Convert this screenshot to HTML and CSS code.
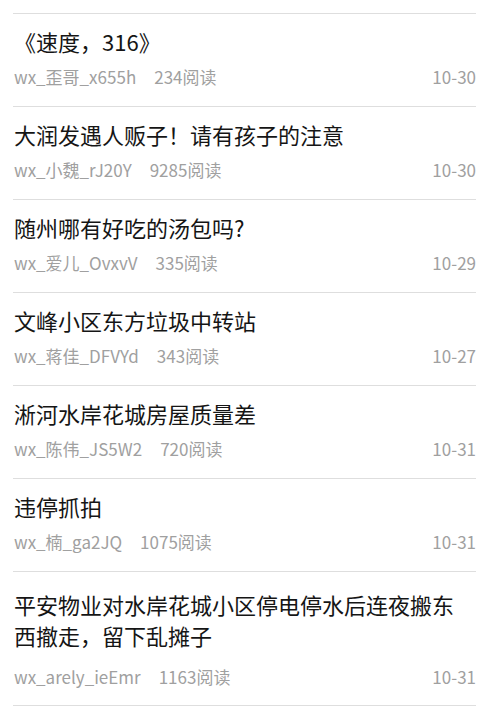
FILE: index.html
```html
<!DOCTYPE html>
<html lang="zh-CN">
<head>
<meta charset="utf-8">
<title>帖子列表</title>
<link rel="stylesheet" href="styles.css">
</head>
<body>
<ul class="list">
  <li class="item">
    <div class="title">《速度，316》</div>
    <div class="meta"><span class="user">wx_歪哥_x655h</span><span class="reads">234阅读</span><span class="date">10-30</span></div>
  </li>
  <li class="item">
    <div class="title">大润发遇人贩子！请有孩子的注意</div>
    <div class="meta"><span class="user">wx_小魏_rJ20Y</span><span class="reads">9285阅读</span><span class="date">10-30</span></div>
  </li>
  <li class="item">
    <div class="title">随州哪有好吃的汤包吗?</div>
    <div class="meta"><span class="user">wx_爱儿_OvxvV</span><span class="reads">335阅读</span><span class="date">10-29</span></div>
  </li>
  <li class="item">
    <div class="title">文峰小区东方垃圾中转站</div>
    <div class="meta"><span class="user">wx_蒋佳_DFVYd</span><span class="reads">343阅读</span><span class="date">10-27</span></div>
  </li>
  <li class="item">
    <div class="title">淅河水岸花城房屋质量差</div>
    <div class="meta"><span class="user">wx_陈伟_JS5W2</span><span class="reads">720阅读</span><span class="date">10-31</span></div>
  </li>
  <li class="item">
    <div class="title">违停抓拍</div>
    <div class="meta"><span class="user">wx_楠_ga2JQ</span><span class="reads">1075阅读</span><span class="date">10-31</span></div>
  </li>
  <li class="item item-long">
    <div class="title">平安物业对水岸花城小区停电停水后连夜搬东西撤走，留下乱摊子</div>
    <div class="meta"><span class="user">wx_arely_ieEmr</span><span class="reads">1163阅读</span><span class="date">10-31</span></div>
  </li>
  <li class="item"></li>
</ul>
</body>
</html>
```

FILE: styles.css
```css
html, body {
  margin: 0;
  padding: 0;
  background: #ffffff;
}

body {
  font-family: "Noto Sans CJK SC", "Noto Sans", sans-serif;
  overflow: hidden;
  height: 716px;
}

.list {
  list-style: none;
  margin: 13px 0 0 0;
  padding: 0 17px 0 13px;
}

.item {
  border-top: 1px solid #dedede;
  padding: 12px 0 18px 1px;
}

.title {
  font-size: 22px;
  line-height: 30px;
  color: #151515;
  padding-right: 10px;
}

.item-long .title {
  line-height: 31px;
  padding-top: 5px;
}

.item-long .meta {
  margin-top: 15px;
}

.item-long {
  padding-bottom: 17px;
}

.meta {
  display: flex;
  align-items: center;
  margin-top: 10px;
  font-size: 17px;
  line-height: 22px;
  color: #a0a0a0;
}

.reads {
  margin-left: 18px;
}

.date {
  margin-left: auto;
}
```
